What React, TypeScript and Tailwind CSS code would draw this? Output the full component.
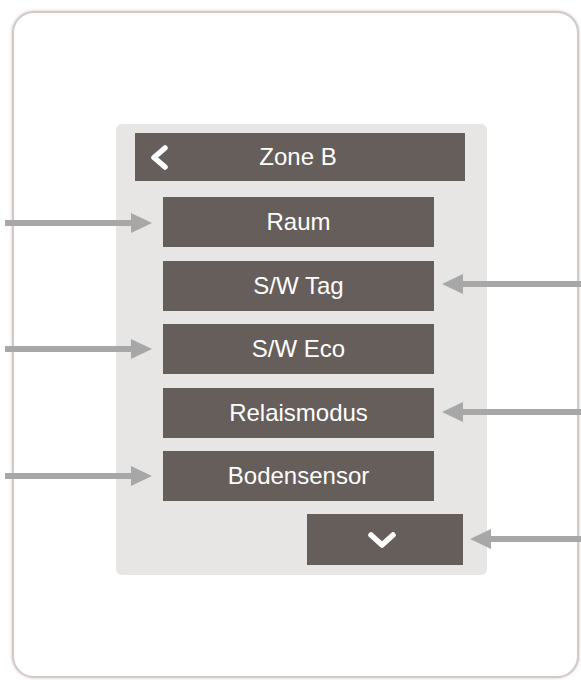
import React from "react";

const items = [
  { label: "Raum", mt: "mt-[16px]" },
  { label: "S/W Tag", mt: "mt-[14px]" },
  { label: "S/W Eco", mt: "mt-[13px]" },
  { label: "Relaismodus", mt: "mt-[14px]" },
  { label: "Bodensensor", mt: "mt-[13px]" },
];

function LeftArrow({ y }: { y: number }) {
  return (
    <g>
      <line x1={5} y1={y} x2={136} y2={y} stroke="#a7a7a7" strokeWidth={6} />
      <polygon points={`131,${y - 10} 152,${y} 131,${y + 10}`} fill="#a7a7a7" />
    </g>
  );
}

function RightArrow({ y, tip }: { y: number; tip: number }) {
  return (
    <g>
      <line x1={tip + 16} y1={y} x2={581} y2={y} stroke="#a7a7a7" strokeWidth={6} />
      <polygon points={`${tip + 21},${y - 10} ${tip},${y} ${tip + 21},${y + 10}`} fill="#a7a7a7" />
    </g>
  );
}

export default function App() {
  return (
    <div
      className="relative h-[680px] w-[581px] overflow-hidden bg-white"
      style={{ fontFamily: '"Liberation Sans", Arial, sans-serif' }}
    >
      <div className="ml-[12px] mt-[11px] h-[667px] w-[567px] rounded-[22px] border-2 border-[#d3cac6] bg-white pl-[102px] pt-[111px] shadow-[0_0_3px_rgba(150,135,130,0.5)]">
        <div className="flex h-[451px] w-[371px] flex-col rounded-[6px] bg-[#e8e6e5]">
          <div className="relative ml-[19px] mt-[9px] flex h-[48px] w-[330px] items-center justify-center bg-[#665e5a] text-[24px] text-white">
            <svg className="absolute left-[13px] top-[12px]" width="22" height="25" viewBox="0 0 22 25">
              <polyline points="17,3 6,12.5 17,22" fill="none" stroke="#ffffff" strokeWidth="5.5" strokeLinecap="round" strokeLinejoin="round" />
            </svg>
            <span className="ml-[-4px]">Zone B</span>
          </div>
          {items.map((it) => (
            <div
              key={it.label}
              className={`${it.mt} ml-[47px] flex h-[50px] w-[271px] items-center justify-center bg-[#665e5a] text-[24px] text-white`}
            >
              {it.label}
            </div>
          ))}
          <div className="ml-[191px] mt-[13px] flex h-[51px] w-[156px] items-center justify-center bg-[#665e5a]">
            <svg className="ml-[-7px]" width="30" height="18" viewBox="0 0 30 18">
              <polyline points="4,4 15,14 26,4" fill="none" stroke="#ffffff" strokeWidth="5.5" strokeLinecap="round" strokeLinejoin="round" />
            </svg>
          </div>
        </div>
      </div>
      <svg className="pointer-events-none absolute left-0 top-0" width="581" height="680" viewBox="0 0 581 680">
        <LeftArrow y={223} />
        <LeftArrow y={349} />
        <LeftArrow y={476} />
        <RightArrow y={284} tip={442} />
        <RightArrow y={412} tip={442} />
        <RightArrow y={539} tip={470} />
      </svg>
    </div>
  );
}
